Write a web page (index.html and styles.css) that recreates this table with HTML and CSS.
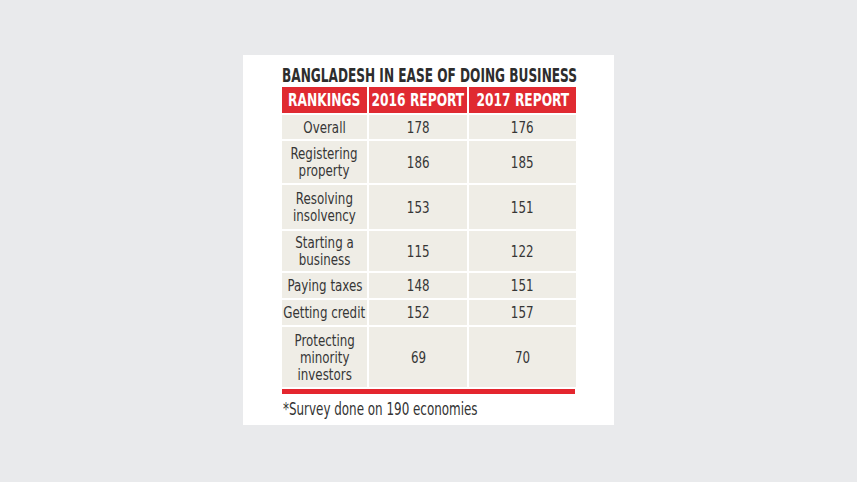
FILE: index.html
```html
<!DOCTYPE html>
<html>
<head>
<meta charset="utf-8">
<link rel="stylesheet" href="styles.css">
</head>
<body>
<div class="stage">
  <div class="card">
    <h1 class="title"><span class="tt">BANGLADESH IN EASE OF DOING BUSINESS</span></h1>
    <div class="grid">
      <div class="hd"><span class="t">RANKINGS</span></div>
      <div class="hd"><span class="t">2016 REPORT</span></div>
      <div class="hd"><span class="t">2017 REPORT</span></div>

      <div class="c"><span class="t">Overall</span></div><div class="c"><span class="t">178</span></div><div class="c"><span class="t">176</span></div>
      <div class="c"><span class="t">Registering<br>property</span></div><div class="c"><span class="t">186</span></div><div class="c"><span class="t">185</span></div>
      <div class="c"><span class="t">Resolving<br>insolvency</span></div><div class="c"><span class="t">153</span></div><div class="c"><span class="t">151</span></div>
      <div class="c"><span class="t">Starting a<br>business</span></div><div class="c"><span class="t">115</span></div><div class="c"><span class="t">122</span></div>
      <div class="c"><span class="t">Paying taxes</span></div><div class="c"><span class="t">148</span></div><div class="c"><span class="t">151</span></div>
      <div class="c"><span class="t">Getting credit</span></div><div class="c"><span class="t">152</span></div><div class="c"><span class="t">157</span></div>
      <div class="c"><span class="t">Protecting<br>minority<br>investors</span></div><div class="c"><span class="t">69</span></div><div class="c"><span class="t">70</span></div>
    </div>
    <div class="bar"></div>
    <p class="note"><span class="nt">*Survey done on 190 economies</span></p>
  </div>
</div>
</body>
</html>
```
FILE: styles.css
```css
html, body {
  margin: 0;
  padding: 0;
}
body {
  background: #e9eaec;
  font-family: "DejaVu Sans Condensed", "Liberation Sans", sans-serif;
  color: #333;
}
.stage {
  width: 857px;
  height: 482px;
  padding-top: 55px;
  padding-left: 243px;
  box-sizing: border-box;
}
.card {
  width: 371px;
  height: 370px;
  background: #fff;
  box-sizing: border-box;
  padding: 8px 0 0 39px;
}
.title {
  margin: 0;
  width: 295px;
  height: 24px;
  font-size: 19px;
  line-height: 24px;
  font-weight: bold;
  color: #2d2d2d;
  white-space: nowrap;
}
.tt {
  display: inline-block;
  transform: scaleX(0.71);
  transform-origin: left center;
}
.t {
  display: inline-block;
  transform: scaleX(0.8);
  transform-origin: center center;
}
.grid {
  display: grid;
  grid-template-columns: 85px 98px 107px;
  grid-template-rows: 26px 24px 42px 44px 40px 25px 25px 60px;
  gap: 2px;
  width: 294px;
}
.hd {
  background: #e02a31;
  color: #fff;
  font-weight: bold;
  font-size: 17px;
  display: flex;
  align-items: center;
  justify-content: center;
  white-space: nowrap;
}
.c {
  background: #efede6;
  font-size: 16.5px;
  line-height: 17px;
  display: flex;
  align-items: center;
  justify-content: center;
  text-align: center;
  color: #363636;
  white-space: nowrap;
}
.bar {
  margin-top: 2px;
  width: 293px;
  height: 5px;
  background: #e4262e;
}
.note {
  margin: 5px 0 0 1px;
  font-size: 17px;
  line-height: 20px;
  color: #333;
  white-space: nowrap;
}
.nt {
  display: inline-block;
  transform: scaleX(0.78);
  transform-origin: left center;
}
```
